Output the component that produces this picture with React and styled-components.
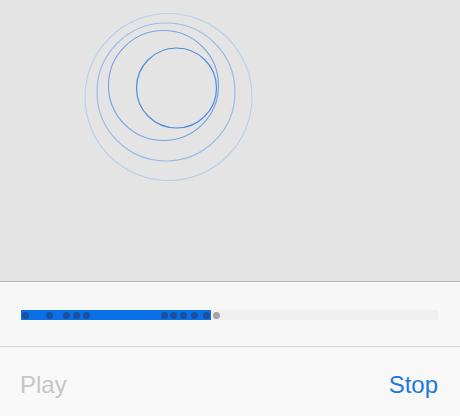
import React from 'react';
import styled, { createGlobalStyle } from 'styled-components';

const GlobalStyle = createGlobalStyle`
* {
    margin: 0;
    padding: 0;
    box-sizing: border-box;
}
body {
    font-family: "Liberation Sans", Arial, sans-serif;
    background: #f8f8f8;
}
`;

const Screen = styled.div`
width: 460px;
height: 416px;
display: flex;
flex-direction: column;
overflow: hidden;
`;

const Stage = styled.div`
height: 282px;
background: #e4e4e4;
border-bottom: 1px solid #b8b8b8;
`;

const Panel = styled.div`
height: 65px;
background: #f7f7f7;
border-bottom: 1px solid #d3d3d3;
padding: 28px 22px 0 21px;
`;

const Track = styled.div`
position: relative;
height: 10px;
background: #efefef;
`;

const Fill = styled.div`
height: 100%;
background: #0a70e8;
`;

const Dot = styled.span`
position: absolute;
top: 1.5px;
width: 7px;
height: 7px;
margin-left: -3.5px;
border-radius: 50%;
background: ${(p) => (p.$muted ? '#a3a3a3' : '#1b4f9c')};
`;

const Toolbar = styled.div`
flex: 1;
display: flex;
justify-content: space-between;
align-items: center;
padding: 7px 22px 0 20px;
background: #f8f8f8;
`;

const Action = styled.button`
border: 0;
background: none;
font-family: "Liberation Sans", Arial, sans-serif;
font-size: 24px;
color: ${(p) => (p.$active ? '#2179db' : '#c6c6c6')};
cursor: pointer;
`;

const rings = [
    { cx: 168.5, cy: 97, r: 83.5, color: '#bcd0ea' },
    { cx: 166, cy: 92, r: 69, color: '#9dbde6' },
    { cx: 163.5, cy: 85.5, r: 55, color: '#7aa7e2' },
    { cx: 176.5, cy: 88, r: 40, color: '#4f8ade' },
];

const marks = [25, 49.5, 66.5, 76.5, 86, 164, 173.5, 183, 194, 206.5];
const progress = 190;

const App = () => {
    return (
        <>
            <GlobalStyle />
            <Screen>
                <Stage>
                    <svg width="460" height="281" viewBox="0 0 460 281">
                        {rings.map((ring, i) => (
                            <circle key={i} cx={ring.cx} cy={ring.cy} r={ring.r} fill="none" stroke={ring.color} strokeWidth="1.2" />
                        ))}
                    </svg>
                </Stage>
                <Panel>
                    <Track>
                        <Fill style={{ width: progress }} />
                        {marks.map((x) => (
                            <Dot key={x} style={{ left: x - 21 }} />
                        ))}
                        <Dot $muted style={{ left: 216 - 21 }} />
                    </Track>
                </Panel>
                <Toolbar>
                    <Action>Play</Action>
                    <Action $active>Stop</Action>
                </Toolbar>
            </Screen>
        </>
    );
};

export default App;
